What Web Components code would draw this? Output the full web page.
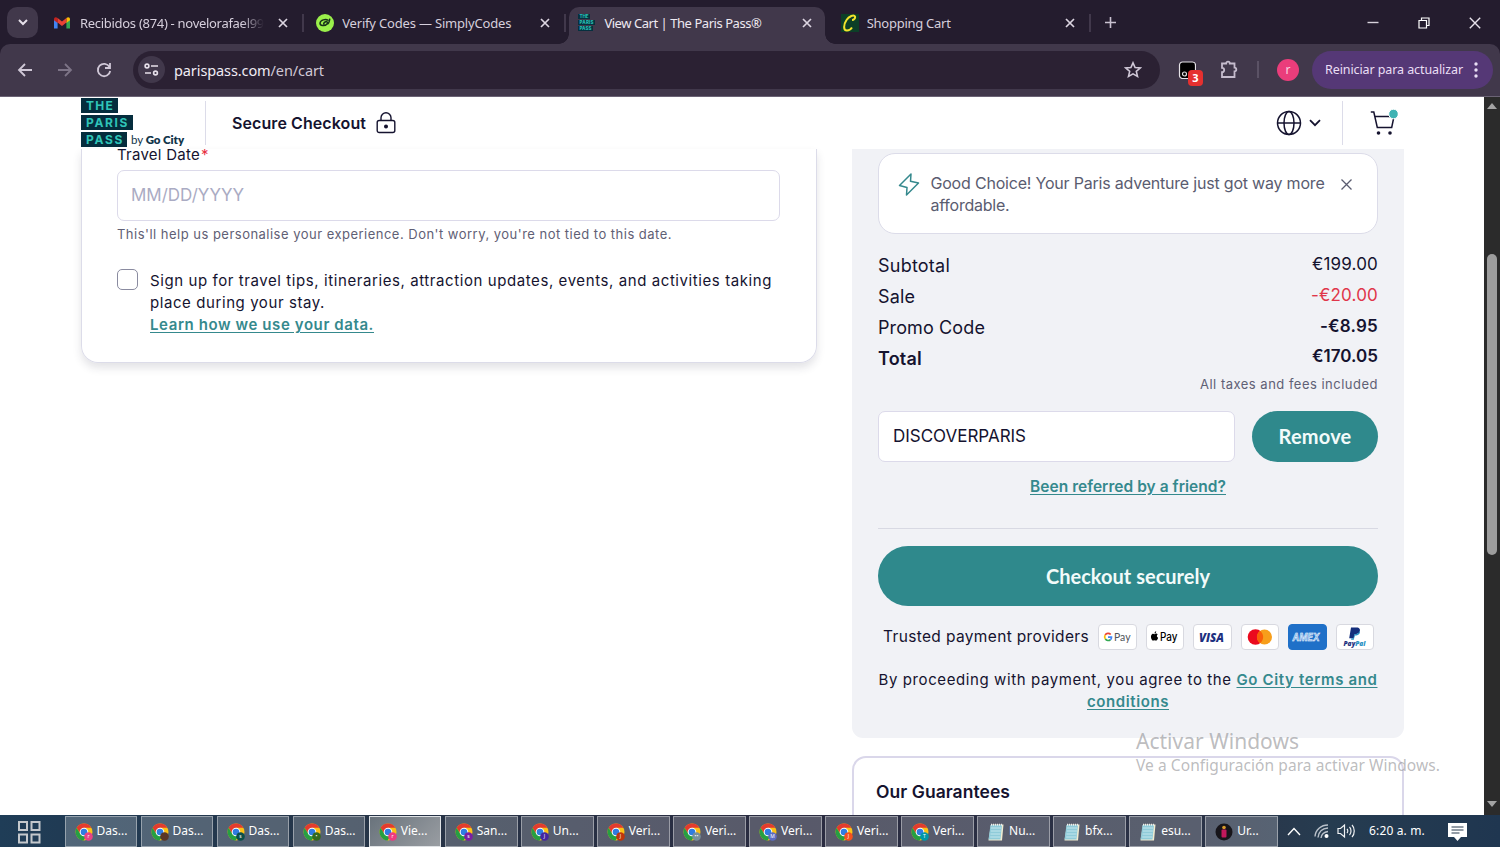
<!DOCTYPE html>
<html lang="en">
<head>
<meta charset="utf-8">
<title>View Cart | The Paris Pass®</title>
<style>
  html, body {
    margin: 0;
    height: 100%;
    overflow: hidden;
  }
  body {
    background: #fff;
    font-family: Inter, "Liberation Sans", sans-serif;
    color: #15132f;
    --teal: #2f898c;
    --chrome-font: "Noto Sans", "Open Sans", sans-serif;
  }
</style>
</head>
<body>
<cart-desktop></cart-desktop>

<template id="cart-desktop">
  <style>
    :host {
      display: flex;
      flex-direction: column;
      width: 1500px;
      height: 847px;
      position: relative;
    }
    .view {
      display: flex;
      height: 718px;
    }
    .page {
      flex: 1;
      display: flex;
      flex-direction: column;
      overflow: hidden;
    }
    .content {
      flex: 1;
      display: flex;
      justify-content: space-between;
      align-items: flex-start;
      padding: 0 80px 0 81px;
    }
    .side {
      display: flex;
      flex-direction: column;
      gap: 18px;
      width: 552px;
    }
    .guarantees {
      box-sizing: border-box;
      height: 100px;
      padding: 22px 22px 0;
      border: 2px solid #dad7ea;
      border-radius: 14px;
      font-size: 17.500px;
      font-weight: 600;
      line-height: 24px;
    }
    .watermark {
      position: absolute;
      left: 1136px;
      top: 727px;
      color: rgba(146, 146, 150, .62);
      font-family: var(--chrome-font);
      font-size: 21px;
      line-height: 28px;
    }
    .watermark div + div {
      font-size: 15.500px;
      line-height: 20px;
    }
  </style>
  <browser-tabs></browser-tabs>
  <browser-toolbar></browser-toolbar>
  <div class="view">
    <div class="page">
      <site-header></site-header>
      <div class="content">
        <travel-card></travel-card>
        <div class="side">
          <order-summary></order-summary>
          <div class="guarantees"><fit-text width="134">Our Guarantees</fit-text></div>
        </div>
      </div>
    </div>
    <page-scrollbar></page-scrollbar>
  </div>
  <task-bar></task-bar>
  <div class="watermark">
    <div><fit-text width="163">Activar Windows</fit-text></div>
    <div><fit-text width="304">Ve a Configuración para activar Windows.</fit-text></div>
  </div>
</template>

<template id="browser-tabs">
  <style>
    :host {
      display: flex;
      align-items: flex-start;
      height: 44px;
      background: #241c2e;
      color: #d6cfdc;
      font-family: var(--chrome-font);
    }
    .search {
      display: flex;
      width: 31px;
      height: 31px;
      margin: 7px 7px 0;
      border-radius: 10px;
      background: #41384b;
    }
    .search svg { margin: auto; }
    .plus { margin: 16px 0 0 10px; }
    .controls {
      display: flex;
      align-items: center;
      gap: 39px;
      height: 45px;
      margin-left: auto;
      margin-right: 19px;
    }
    svg { display: block; }
  </style>
  <div class="search">
    <svg width="10" height="7" fill="none" stroke="#e6e0ea" stroke-width="2"><path d="M1 1l4 4 4-4"/></svg>
  </div>
  <browser-tab fade>
    <svg slot="icon" width="16" height="16" viewBox="0 0 16 16"><path fill="#4285f4" d="M0 4v9.500h3.600V7z"/><path fill="#34a853" d="M16 4v9.500h-3.600V7z"/><path fill="#c5221f" d="M0 4.200C0 2 2 1.600 3.600 3v5L0 5.200z"/><path fill="#fbbc04" d="M16 4.200C16 2 14 1.600 12.400 3v5L16 5.200z"/><path fill="#ea4335" d="M3.600 3L8 6.400l4.400-3.400v4.600L8 11 3.600 7.600z"/></svg>
    <fit-text width="184">Recibidos (874) - novelorafael99</fit-text>
  </browser-tab>
  <browser-tab>
    <svg slot="icon" width="18" height="18" viewBox="0 0 18 18"><circle cx="9" cy="9" r="9" fill="#9bf04b"/><path d="M12.500 6.500c-3-2-8-.5-8.500 2.500-.3 3 5 3.500 7 1 1-1.300 0-3-1.500-2.300S7 10 8.500 10.200M11 10c2 0 2.500-3 2.800-5.400" fill="none" stroke="#17301a" stroke-width="1.500"/></svg>
    <fit-text width="169">Verify Codes — SimplyCodes</fit-text>
  </browser-tab>
  <browser-tab active>
    <svg slot="icon" width="17" height="17" viewBox="0 0 17 17"><g fill="#06303f"><path d="M0 0h12v5H0zM0 6h17v5H0zM0 12h15v5H0z"/></g><g fill="#28bdb3" font-family="Inter" font-size="4.500" font-weight="800"><text x="1.500" y="4.200" textLength="9">THE</text><text x="1.500" y="10" textLength="14">PARIS</text><text x="1.500" y="16" textLength="12">PASS</text></g></svg>
    <fit-text width="157">View Cart | The Paris Pass®</fit-text>
  </browser-tab>
  <browser-tab>
    <svg slot="icon" width="18" height="18" viewBox="0 0 18 18"><path fill="#0c3f27" d="M0 0h18v18H0z"/><path d="M11 6c2 0 3.500-2 3-3.500C13 .5 8 2 5.500 6 2.500 10.500 2 16.500 6 16.500c2.500 0 4-1.500 5-3" fill="none" stroke="#f2e32c" stroke-width="2"/></svg>
    <fit-text width="84">Shopping Cart</fit-text>
  </browser-tab>
  <svg class="plus" width="13" height="13" stroke="#c9c1d0" stroke-width="1.600"><path d="M6.500 1v11M1 6.500h11"/></svg>
  <div class="controls">
    <svg width="12" height="12" stroke="#d8d2dc" stroke-width="1.400"><path d="M.5 5.500h11"/></svg>
    <svg width="12" height="12" fill="none" stroke="#fff" stroke-width="1.200"><path d="M1 3.500h7.500V11H1zM3.500 3.500V1H11v7.500H8.500"/></svg>
    <svg width="12" height="12" stroke="#e8e3ec" stroke-width="1.400"><path d="M.8.800l10.400 10.400M11.200.8L.8 11.200"/></svg>
  </div>
</template>

<template id="browser-tab">
  <style>
    :host {
      display: flex;
      align-items: center;
      box-sizing: border-box;
      width: 262.200px;
      height: 31px;
      margin-top: 7px;
      padding-left: 9px;
      font-size: 13px;
      position: relative;
    }
    :host([active]) {
      width: 256px;
      height: 37px;
      margin-right: 6.300px;
      padding-bottom: 6px;
      border-radius: 10px 10px 0 0;
      background: #41384b;
      color: #eee9f1;
    }
    /* the outward curves at the foot of the active tab */
    :host([active])::before, :host([active])::after {
      content: "";
      position: absolute;
      bottom: 0;
      left: -10px;
      width: 10px;
      height: 10px;
      background: radial-gradient(circle at 0 0, transparent 9.500px, #41384b 10px);
    }
    :host([active])::after {
      left: 256px;
      background: radial-gradient(circle at 100% 0, transparent 9.500px, #41384b 10px);
    }
    .icon { width: 26px; }
    .label { width: 186px; overflow: hidden; line-height: 20px; }
    :host([fade]) .label {
      -webkit-mask-image: linear-gradient(90deg, #000 162px, transparent 184px);
      mask-image: linear-gradient(90deg, #000 162px, transparent 184px);
    }
    .close { margin-left: 12px; }
    .sep { width: 2px; height: 18px; margin-left: 14px; background: #41384b; }
    :host([active]) .sep { display: none; }
  </style>
  <div class="icon"><slot name="icon"></slot></div>
  <div class="label"><slot></slot></div>
  <svg class="close" width="10" height="10" stroke="#dcd5e1" stroke-width="1.700"><path d="M1 1l8 8M9 1L1 9"/></svg>
  <div class="sep"></div>
</template>

<template id="browser-toolbar">
  <style>
    :host { display: block; background: #241c2e; font-family: var(--chrome-font); }
    .bar {
      display: flex;
      align-items: center;
      box-sizing: border-box;
      height: 53px;
      padding: 0 7px 1px 17px;
      border-radius: 10px 10px 0 0;
      border-bottom: 1px solid #6b6375;
      background: #41384b;
    }
    .nav { display: flex; gap: 23.500px; }
    svg { display: block; }
    .omnibox {
      display: flex;
      align-items: center;
      box-sizing: border-box;
      width: 1027px;
      height: 38px;
      margin-left: 21px;
      padding: 0 18px 0 5px;
      border-radius: 19px;
      background: #2b2133;
      color: #cfc8d5;
      font-size: 14.500px;
    }
    .site { display: flex; width: 27px; height: 27px; margin-right: 9px; border-radius: 50%; background: #41384b; }
    .site svg { margin: auto; }
    .host { color: #f0ecf3; }
    .star { margin-left: auto; }
    .ext { position: relative; margin-left: 18px; }
    .badge {
      position: absolute;
      left: 10px;
      top: 9px;
      width: 15px;
      height: 16px;
      border-radius: 4px;
      background: #e5302f;
      color: #fff;
      font-size: 11px;
      font-weight: 700;
      line-height: 16px;
      text-align: center;
    }
    .puzzle { margin-left: 23px; }
    .sep { width: 2px; height: 17px; margin: 0 18px; background: #5b5265; }
    .avatar {
      width: 22px;
      height: 22px;
      border-radius: 50%;
      background: #ea3d7b;
      color: #fbd3e2;
      font-size: 12px;
      line-height: 21px;
      text-align: center;
    }
    .restart {
      display: flex;
      align-items: center;
      justify-content: space-between;
      box-sizing: border-box;
      width: 181px;
      height: 38px;
      margin-left: auto;
      padding: 0 15px 0 13px;
      border-radius: 19px;
      background: #553876;
      color: #eadff5;
      font-size: 12.500px;
    }
  </style>
  <div class="bar">
    <div class="nav">
      <svg width="16" height="16" fill="none" stroke="#d0c8d7" stroke-width="1.800"><path d="M15 8H2M8 2L2 8l6 6"/></svg>
      <svg width="16" height="16" fill="none" stroke="#7d7487" stroke-width="1.800"><path d="M1 8h13M8 2l6 6-6 6"/></svg>
      <svg width="16" height="16" fill="none" stroke="#d0c8d7" stroke-width="1.800"><path d="M13.500 5A6.200 6.200 0 1 0 14.200 9M14 1v5H9"/></svg>
    </div>
    <div class="omnibox">
      <div class="site">
        <svg width="15" height="13" fill="none" stroke="#e6e0ea" stroke-width="1.600"><circle cx="3" cy="3" r="1.900"/><path d="M7 3h7M1 10h6"/><circle cx="11.500" cy="10" r="1.900"/></svg>
      </div>
      <fit-text width="150"><span class="host">parispass.com</span>/en/cart</fit-text>
      <svg class="star" width="18" height="17" fill="none" stroke="#d0c8d7" stroke-width="1.600"><path d="M9 1.800l2.100 4.700 5.100.5-3.900 3.400 1.200 5L9 12.800l-4.500 2.600 1.200-5L1.800 7l5.100-.5z"/></svg>
    </div>
    <div class="ext">
      <svg width="18" height="18"><rect x="1.500" y="1" width="16" height="16.500" rx="3" fill="#000" stroke="#e6e3e8" stroke-width="1.200"/><circle cx="6.500" cy="13" r="2" fill="none" stroke="#ddd" stroke-width="1.200"/></svg>
      <div class="badge">3</div>
    </div>
    <svg class="puzzle" width="20" height="20" fill="none" stroke="#c5bccd" stroke-width="1.800"><path d="M3 3.500h4.200a1.800 1.800 0 0 1 3.600 0h4.700v4.200a1.800 1.800 0 0 1 0 3.600v5.700H3v-4.800a2.200 2.200 0 0 0 0-4.400z"/></svg>
    <div class="sep"></div>
    <div class="avatar">r</div>
    <div class="restart">
      <fit-text width="138">Reiniciar para actualizar</fit-text>
      <svg width="4" height="18" fill="#eadff5"><circle cx="2" cy="3" r="1.700"/><circle cx="2" cy="9" r="1.700"/><circle cx="2" cy="15" r="1.700"/></svg>
    </div>
  </div>
</template>

<template id="site-header">
  <style>
    :host {
      display: flex;
      flex: none;
      align-items: flex-start;
      box-sizing: border-box;
      height: 52px;
      padding: 1px 86px 0 81px;
      background: #fff;
    }
    svg { display: block; }
    .logo { display: flex; flex-direction: column; gap: 2px; width: 124px; }
    .logo div { display: flex; align-items: center; height: 15px; }
    .logo b {
      box-sizing: border-box;
      height: 15px;
      padding-left: 5px;
      background: #052d3d;
      color: #2fc5b8;
      font-size: 12px;
      font-weight: 700;
      line-height: 15px;
    }
    .logo span { margin-left: 4px; font-family: Lato, sans-serif; font-size: 11.500px; color: #12354a; }
    .logo strong { font-weight: 800; }
    .rule { width: 1px; height: 44px; margin-top: 3px; background: #dcdce9; }
    .title { margin: 10px 0 0 26px; font-size: 16px; font-weight: 600; line-height: 30px; }
    .lock { margin: 14px 0 0 9.500px; }
    .tools { display: flex; margin-left: auto; }
    .globe { margin-top: 12px; }
    .chevron { margin: 21px 21px 0 7px; }
    .cart { margin: 10px 0 0 27px; }
  </style>
  <div class="logo">
    <div><b style="width:37px"><fit-text width="28">THE</fit-text></b></div>
    <div><b style="width:52px"><fit-text width="43">PARIS</fit-text></b></div>
    <div><b style="width:46px"><fit-text width="38">PASS</fit-text></b><span><fit-text width="53">by <strong>Go City</strong></fit-text></span></div>
  </div>
  <div class="rule"></div>
  <div class="title"><fit-text width="134">Secure Checkout</fit-text></div>
  <svg class="lock" width="20" height="22" fill="none" stroke="#15132f" stroke-width="1.400"><rect x="1.200" y="8.500" width="17.600" height="12" rx="2"/><path d="M5 8.500V5.800a5 5 0 0 1 10 0v2.700"/><circle cx="10" cy="14.500" r="1.300" fill="#15132f"/></svg>
  <div class="tools">
    <svg class="globe" width="26" height="26" fill="none" stroke="#15132f" stroke-width="1.500"><circle cx="13" cy="13" r="11.500"/><ellipse cx="13" cy="13" rx="5" ry="11.500"/><path d="M1.500 13h23"/></svg>
    <svg class="chevron" width="12" height="8" fill="none" stroke="#15132f" stroke-width="1.800"><path d="M1 1.200l5 5 5-5"/></svg>
    <div class="rule"></div>
    <svg class="cart" width="28" height="28" fill="none" stroke="#15132f" stroke-width="1.500"><path d="M.8 4h3l3.500 15.500h14.400L24 8.500H5"/><circle cx="8.500" cy="25" r="1.800" fill="#15132f" stroke="none"/><circle cx="20" cy="25" r="1.800" fill="#15132f" stroke="none"/><circle cx="23.500" cy="6" r="4.800" fill="#3fb3b3" stroke="#fff" stroke-width="1"/></svg>
  </div>
</template>

<template id="travel-card">
  <style>
    :host {
      display: block;
      box-sizing: border-box;
      width: 736px;
      height: 214px;
      padding: 0 36px 0 35px;
      border: 1px solid #dcdce9;
      border-top: 0;
      border-radius: 0 0 17px 17px;
      box-shadow: 0 5px 9px rgba(40, 40, 60, .13);
      font-size: 15px;
    }
    /* the label is scrolled halfway up to the site header */
    .label { margin-top: -5px; line-height: 22px; }
    i { margin-left: 1px; font-style: normal; color: #e8303f; }
    .date {
      box-sizing: border-box;
      height: 51px;
      margin-top: 4px;
      padding-left: 13px;
      border: 1px solid #dcdaea;
      border-radius: 7px;
      color: #aaabc3;
      font-size: 17px;
      line-height: 49px;
    }
    .hint { margin-top: 4px; color: #5f6075; font-size: 13px; line-height: 18px; }
    .signup { display: flex; gap: 12px; margin-top: 26px; line-height: 22px; }
    .box {
      box-sizing: border-box;
      width: 21px;
      height: 21px;
      border: 1.500px solid #8a8ba0;
      border-radius: 5px;
    }
    .signup div + div { padding-top: 1px; }
    a { color: #35898d; font-weight: 600; text-decoration: underline; text-underline-offset: 2px; }
  </style>
  <div class="label"><fit-text width="83">Travel Date</fit-text><i>*</i></div>
  <div class="date"><fit-text width="113">MM/DD/YYYY</fit-text></div>
  <div class="hint"><fit-text width="555">This'll help us personalise your experience. Don't worry, you're not tied to this date.</fit-text></div>
  <div class="signup">
    <div class="box"></div>
    <div>
      <fit-text width="622">Sign up for travel tips, itineraries, attraction updates, events, and activities taking</fit-text><br>
      <fit-text width="175">place during your stay.</fit-text><br>
      <a><fit-text width="224">Learn how we use your data.</fit-text></a>
    </div>
  </div>
</template>

<template id="order-summary">
  <style>
    :host {
      display: block;
      box-sizing: border-box;
      height: 589px;
      padding: 4px 26px 0;
      border-radius: 0 0 11px 11px;
      background: #f1f2f6;
    }
    .notice {
      display: flex;
      box-sizing: border-box;
      height: 81px;
      padding: 18px 25px 0 19px;
      border: 1px solid #dcdce9;
      border-radius: 17px;
      background: #fff;
      color: #5a5c70;
      font-size: 16px;
      line-height: 22px;
    }
    .notice p { flex: 1; margin: 0 0 0 10.500px; }
    .notice .close { margin-top: 7px; }
    .rows { margin-top: 16px; }
    .promo { display: flex; gap: 17px; margin-top: 17px; }
    .code {
      box-sizing: border-box;
      width: 357px;
      height: 51px;
      padding-left: 14px;
      border: 1px solid #dcdaea;
      border-radius: 7px;
      background: #fff;
      font-size: 17px;
      line-height: 49px;
    }
    .center { text-align: center; }
    .refer { height: 41px; margin-top: 13px; padding-bottom: 12px; border-bottom: 1px solid #d8d9e3; font-size: 15.500px; line-height: 24px; }
    a { color: #35898d; font-weight: 600; text-decoration: underline; text-underline-offset: 2px; }
    .taxes { color: #5f6075; font-size: 13px; line-height: 20px; text-align: right; }
    pill-button.checkout { height: 60px; margin-top: 17px; }
    pill-button.remove { box-sizing: border-box; width: 126px; height: 51px; padding-bottom: 1px; }
    .providers { display: flex; align-items: center; gap: 9px; margin: 18px 0 0 5px; font-size: 15.500px; line-height: 26px; }
    .terms { margin-top: 19px; font-size: 15px; line-height: 22px; }
  </style>
  <div class="notice">
    <svg width="22" height="25" fill="none" stroke="#35898d" stroke-width="1.500" stroke-linejoin="round"><path d="M13 2L1.500 13.500 9 15.500 8.500 23 20.500 11 12.500 9.200z"/></svg>
    <p><fit-text width="394">Good Choice! Your Paris adventure just got way more</fit-text><br><fit-text width="79">affordable.</fit-text></p>
    <svg class="close" width="11" height="11" stroke="#5a5c70" stroke-width="1.300"><path d="M.5.500l10 10M10.500.500l-10 10"/></svg>
  </div>
  <div class="rows">
    <price-row><fit-text width="72">Subtotal</fit-text><fit-text slot="value" width="66">€199.00</fit-text></price-row>
    <price-row tone="sale"><fit-text width="37">Sale</fit-text><fit-text slot="value" width="67">-€20.00</fit-text></price-row>
    <price-row tone="strong"><fit-text width="107">Promo Code</fit-text><fit-text slot="value" width="58">-€8.95</fit-text></price-row>
    <price-row tone="total"><fit-text width="44">Total</fit-text><fit-text slot="value" width="66">€170.05</fit-text></price-row>
  </div>
  <div class="taxes"><fit-text width="178">All taxes and fees included</fit-text></div>
  <div class="promo">
    <div class="code"><fit-text width="133">DISCOVERPARIS</fit-text></div>
    <pill-button class="remove"><fit-text width="73">Remove</fit-text></pill-button>
  </div>
  <div class="refer center"><a><fit-text width="196">Been referred by a friend?</fit-text></a></div>
  <pill-button class="checkout"><fit-text width="164">Checkout securely</fit-text></pill-button>
  <div class="providers">
    <fit-text width="206">Trusted payment providers</fit-text>
    <pay-badge><svg width="36" height="24"><g fill="none" stroke-width="1.700"><path d="M11.700 9.500A3.500 3.500 0 0 0 6.200 10" stroke="#ea4335"/><path d="M6.200 10a3.500 3.500 0 0 0 .2 4" stroke="#fbbc04"/><path d="M6.400 14a3.500 3.500 0 0 0 5 .8" stroke="#34a853"/><path d="M11.400 14.800c1-.8 1.200-1.700 1.100-2.600H9" stroke="#4285f4"/></g><text x="15" y="16" font-family="Lato" font-size="11.500" fill="#50545a" textLength="16.500" lengthAdjust="spacingAndGlyphs">Pay</text></svg></pay-badge>
    <pay-badge><svg width="36" height="24"><path d="M8 9c1-.7 2-.4 2.700.2-1.300 1-1 2.900.4 3.500-.5 1.600-1.200 2.900-2.100 2.900-.6 0-.9-.3-1.500-.3s-1 .3-1.500.3C4.600 15.600 2.800 10.800 5 9.200 6 8.500 7 9 7.500 9.200zM7.500 8.500c0-1.200.6-2 1.700-2.200.1 1.200-.7 2-1.700 2.200z"/><text x="13" y="16" font-family="Inter" font-size="11.500" font-weight="500" textLength="17.500" lengthAdjust="spacingAndGlyphs">Pay</text></svg></pay-badge>
    <pay-badge><svg width="36" height="24"><text x="5" y="16.500" font-family="Open Sans" font-size="12" font-weight="800" font-style="italic" fill="#1d3080" textLength="25" lengthAdjust="spacingAndGlyphs">VISA</text></svg></pay-badge>
    <pay-badge><svg width="36" height="24"><circle cx="13.500" cy="12" r="7.800" fill="#eb0a1e"/><circle cx="22.500" cy="12" r="7.500" fill="#f79e1b"/><path d="M18 5.800a7.700 7.700 0 0 1 0 12.400 7.700 7.700 0 0 1 0-12.400z" fill="#f95f09"/></svg></pay-badge>
    <pay-badge blue><svg width="36" height="24"><text x="3.500" y="16" font-family="Inter" font-size="11" font-weight="700" font-style="italic" fill="#7fb2ea" stroke="#fff" stroke-width=".5" textLength="27" lengthAdjust="spacingAndGlyphs">AMEX</text></svg></pay-badge>
    <pay-badge><svg width="36" height="24"><path d="M14 2.500h5.500c3 0 4 2 3.200 4-.7 2-2.500 2.700-5 2.700l-.9 4h-4.600z" fill="#152f7c"/><path d="M22.800 5.500c.8 3.500-1.300 5-5 5l-1 4.200h-2.700l.3-1.500h2l1-4c2.900 0 4.700-1 5.400-3.700z" fill="#2790c3"/><text x="6.500" y="20.500" font-family="Open Sans" font-size="7" font-weight="800" font-style="italic" fill="#1d3080" textLength="22" lengthAdjust="spacingAndGlyphs">Pay<tspan fill="#2790c3">Pal</tspan></text></svg></pay-badge>
  </div>
  <div class="terms center">
    <fit-text width="358">By proceeding with payment, you agree to the&nbsp;</fit-text><a><fit-text width="141">Go City terms and</fit-text></a><br>
    <a><fit-text width="82">conditions</fit-text></a>
  </div>
</template>

<template id="price-row">
  <style>
    :host {
      display: flex;
      justify-content: space-between;
      height: 31px;
      font-size: 18px;
      line-height: 31px;
    }
    .value { margin-top: -1px; font-size: 17px; }
    :host([tone=sale]) .value { color: #e0364a; }
    :host([tone=strong]) .value, :host([tone=total]) { font-weight: 600; }
    :host([tone=total]) .value { margin-top: -2px; }
  </style>
  <slot></slot>
  <div class="value"><slot name="value"></slot></div>
</template>

<template id="pill-button">
  <style>
    :host {
      display: flex;
      align-items: center;
      justify-content: center;
      border-radius: 30px;
      background: var(--teal);
      color: #f2fbfa;
      font-family: Lato, sans-serif;
      font-size: 20px;
      font-weight: 700;
    }
  </style>
  <slot></slot>
</template>

<template id="pay-badge">
  <style>
    :host {
      display: block;
      box-sizing: border-box;
      width: 38.500px;
      height: 26px;
      border: 1px solid #d8d9e0;
      border-radius: 4px;
      background: #fff;
      line-height: 0;
    }
    :host([blue]) { border-color: #1f70c8; background: #1f70c8; }
    ::slotted(svg) { overflow: visible; }
  </style>
  <slot></slot>
</template>

<template id="page-scrollbar">
  <style>
    :host {
      display: flex;
      flex-direction: column;
      align-items: center;
      width: 16px;
      background: #2b2b2b;
    }
    .thumb { width: 10px; height: 301px; margin-top: 145px; border-radius: 5px; background: #9d9d9d; }
    .up { margin-top: 6px; }
    .down { margin: auto 0 8px; }
    svg { display: block; }
  </style>
  <svg class="up" width="10" height="6" fill="#a3a3a3"><path d="M0 6l5-6 5 6z"/></svg>
  <div class="thumb"></div>
  <svg class="down" width="10" height="6" fill="#a3a3a3"><path d="M0 0h10L5 6z"/></svg>
</template>

<template id="task-bar">
  <style>
    :host {
      display: flex;
      height: 32px;
      background: linear-gradient(90deg, #1f3d57 0, #203b54 60px, #263548 350px, #2a2b40 800px, #2b3347 1200px, #263c50 1330px, #1f3650 1500px);
      color: #fff;
      font-family: var(--chrome-font);
      font-size: 12px;
    }
    svg { display: block; }
    .view { margin: 6px 23.500px 0 18px; }
    .apps { display: flex; gap: 3.250px; }
    .tray { display: flex; align-items: center; margin-left: 9px; }
    .tray > * { flex: none; }
    .tray fit-text { padding-bottom: 1px; }
  </style>
  <svg class="view" width="23" height="23" fill="none" stroke="#c4c8cc" stroke-width="2"><path d="M1 1h8v8H1zM13.500 1h8v8h-8zM1 13.500h8v8H1zM13.500 13.500h8v8h-8z"/></svg>
  <div class="apps">
    <task-button badge="#e84385" mark="r">Das...</task-button>
    <task-button badge="#5a3626">Das...</task-button>
    <task-button badge="#0b4f4a" mark="s">Das...</task-button>
    <task-button badge="#34691e" mark="•">Das...</task-button>
    <task-button badge="#ee3b80" mark="r" active>Vie...</task-button>
    <task-button badge="#7b1fa2" mark="s">San...</task-button>
    <task-button badge="#4527a0" mark="J">Un...</task-button>
    <task-button badge="#bf360c" mark="J">Veri...</task-button>
    <task-button badge="#78909c" mark="••">Veri...</task-button>
    <task-button badge="#5c6bc0" mark="M">Veri...</task-button>
    <task-button badge="#f4511e" mark="J">Veri...</task-button>
    <task-button badge="#0097a7" mark="T">Veri...</task-button>
    <task-button kind="note">Nu...</task-button>
    <task-button kind="note">bfx...</task-button>
    <task-button kind="note">esu...</task-button>
    <task-button kind="round">Ur...</task-button>
  </div>
  <div class="tray">
    <svg width="14" height="9" fill="none" stroke="#fff" stroke-width="1.400"><path d="M1 8l6-6.500L13 8"/></svg>
    <svg style="margin-left:13px" width="16" height="16" fill="none" stroke="#b9c1ca" stroke-width="1.400"><path d="M1 13.500C1.500 7 7 2 14 2M4 14.500C4.500 9 8.500 5.500 14 5M7 15c.5-3.500 3-6 7-6.500"/><circle cx="12.500" cy="13" r="2" fill="#fff" stroke="none"/></svg>
    <svg style="margin-left:7px" width="19" height="16" fill="none" stroke="#f0f2f4" stroke-width="1.200"><path d="M1 5.500h2.500L7.500 2v12l-4-3.500H1zM10 6c1 1 1 3 0 4M12.500 4c2 2 2 6 0 8M15 2c3 3 3 9 0 12"/></svg>
    <fit-text style="margin-left:13px" width="56">6:20 a. m.</fit-text>
    <svg style="margin-left:23px" width="19" height="19"><path d="M0 1h19v14h-6l-3.500 4L6 15H0z" fill="#fff"/><path d="M3.500 5h12M3.500 8h12M3.500 11h8" stroke="#26394d"/></svg>
  </div>
</template>

<template id="task-button">
  <style>
    :host {
      display: flex;
      align-items: center;
      gap: 4px;
      box-sizing: border-box;
      width: 72.800px;
      height: 31px;
      margin-top: 1px;
      padding-left: 9px;
      border: 1px solid rgba(255, 255, 255, .4);
      background: rgba(255, 255, 255, .22);
    }
    :host([active]) {
      border-color: #dfe2e5;
      background: linear-gradient(135deg, #69737c, #999da2);
    }
    svg { display: block; flex: none; }
    span { padding-bottom: 2px; white-space: nowrap; }
  </style>
  <svg width="18" height="18" viewBox="0 0 18 18"></svg>
  <span><slot></slot></span>
</template>

<script>
  (function() {
    // Clones the <template> whose id is the element's own tag name.
    class TemplateElement extends HTMLElement {
      constructor() {
        super();
        let tmpl = document.getElementById(this.localName);
        this.attachShadow({mode: 'open'}).appendChild(document.importNode(tmpl.content, true));
      }
    }

    const CHROME_ICON =
      '<circle cx="9" cy="9" r="8.500" fill="#fbc116"/>' +
      '<path fill="#e33b2e" d="M1.600 4.800a8.500 8.500 0 0 1 14.800 0H9L5.500 11z"/>' +
      '<path fill="#269f42" d="M1.600 4.800l3.800 6.300 7.200 0-4 6.400A8.500 8.500 0 0 1 1.600 4.800z"/>' +
      '<circle cx="9" cy="9" r="4.300" fill="#fff"/><circle cx="9" cy="9" r="3.300" fill="#2f7de1"/>';
    const NOTE_ICON =
      '<path d="M4 1.500h12.500L15 17.500H1.500z" fill="#f2ecd0"/>' +
      '<path d="M3.500 2h11.500l-1.500 14.500H1.500z" fill="#8fcbd9"/>' +
      '<path d="M4 5h10M3.800 8h10M3.500 11h10M3.200 14h10" stroke="#d0eef3" stroke-width=".8"/>' +
      '<path d="M4 1.800h11" stroke="#e9f0f0" stroke-width="2" stroke-dasharray="1 1"/>';
    const ROUND_ICON =
      '<circle cx="9" cy="9" r="8.500" fill="#17151a"/><circle cx="9" cy="4.500" r="1.800" fill="#d89a2b"/>' +
      '<rect x="6.500" y="6.500" width="5" height="8" rx="1" fill="#c2185b"/>';

    class TaskButton extends TemplateElement {
      connectedCallback() {
        let svg = this.shadowRoot.querySelector('svg');
        let kind = this.getAttribute('kind');
        if (kind === 'note') {
          svg.innerHTML = NOTE_ICON;
        } else if (kind === 'round') {
          svg.innerHTML = ROUND_ICON;
        } else {
          svg.innerHTML = CHROME_ICON +
            `<circle cx="13.500" cy="13.500" r="4.300" fill="${this.getAttribute('badge')}"/>` +
            `<text x="13.500" y="15.300" text-anchor="middle" font-size="5" fill="#fff">${this.getAttribute('mark') || ''}</text>`;
        }
      }
    }

    // One line of text, tracked so that it fills the given width.
    class FitText extends HTMLElement {
      constructor() {
        super();
        this.attachShadow({mode: 'open'}).innerHTML =
          '<style>:host { display: inline; white-space: nowrap; }</style><span><slot></slot></span>';
      }
      connectedCallback() {
        let span = this.shadowRoot.querySelector('span');
        let natural = span.getBoundingClientRect().width;
        let count = this.textContent.length;
        span.style.letterSpacing = (this.getAttribute('width') - natural) / count + 'px';
      }
    }

    ['browser-tabs', 'browser-tab', 'browser-toolbar', 'site-header', 'travel-card',
      'order-summary', 'price-row', 'pill-button', 'pay-badge', 'page-scrollbar',
      'task-bar'].forEach(name => customElements.define(name, class extends TemplateElement {}));
    customElements.define('task-button', TaskButton);
    customElements.define('cart-desktop', class extends TemplateElement {});
    customElements.define('fit-text', FitText);
  })();
</script>
</body>
</html>
